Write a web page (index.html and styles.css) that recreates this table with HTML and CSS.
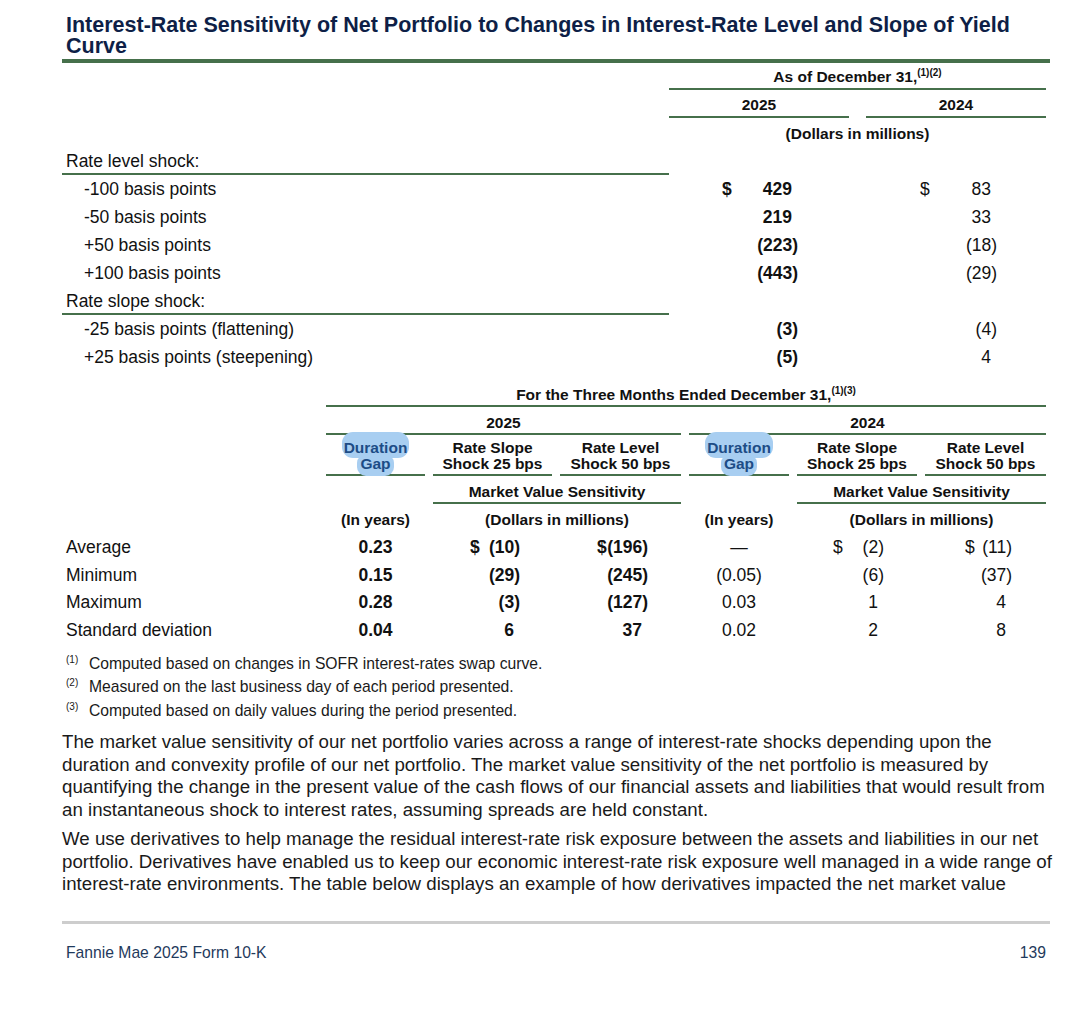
FILE: index.html
```html
<!DOCTYPE html>
<html>
<head>
<meta charset="utf-8">
<title>Interest-Rate Sensitivity</title>
<link rel="stylesheet" href="styles.css">
</head>
<body>
<div class="page">
  <h1 class="title">Interest-Rate Sensitivity of Net Portfolio to Changes in Interest-Rate Level and Slope of Yield Curve</h1>

  <section class="t1">
    <div class="r h1r"><div class="all rule">As of December 31,<sup class="sx">(1)(2)</sup></div></div>
    <div class="r h2r"><div class="c2 rule">2025</div><div class="c4 rule">2024</div></div>
    <div class="r h3r"><div class="all">(Dollars in millions)</div></div>

    <div class="r sec"><div class="lbl rule">Rate level shock:</div></div>
    <div class="r d"><div class="lbl ind">-100 basis points</div><div class="c2 m a25 b"><span class="cur">$</span><span class="num p">429</span></div><div class="c4 m a24"><span class="cur">$</span><span class="num p">83</span></div></div>
    <div class="r d"><div class="lbl ind">-50 basis points</div><div class="c2 m a25 b"><span class="num p">219</span></div><div class="c4 m a24"><span class="num p">33</span></div></div>
    <div class="r d"><div class="lbl ind">+50 basis points</div><div class="c2 m a25 b"><span class="num">(223)</span></div><div class="c4 m a24"><span class="num">(18)</span></div></div>
    <div class="r d"><div class="lbl ind">+100 basis points</div><div class="c2 m a25 b"><span class="num">(443)</span></div><div class="c4 m a24"><span class="num">(29)</span></div></div>
    <div class="r sec"><div class="lbl rule">Rate slope shock:</div></div>
    <div class="r d"><div class="lbl ind">-25 basis points (flattening)</div><div class="c2 m a25 b"><span class="num">(3)</span></div><div class="c4 m a24"><span class="num">(4)</span></div></div>
    <div class="r d"><div class="lbl ind">+25 basis points (steepening)</div><div class="c2 m a25 b"><span class="num">(5)</span></div><div class="c4 m a24"><span class="num p">4</span></div></div>
  </section>

  <section class="t2">
    <div class="r g1"><div class="all rule">For the Three Months Ended December 31,<sup class="sx">(1)(3)</sup></div></div>
    <div class="r g2"><div class="y25 rule">2025</div><div class="y24 rule">2024</div></div>
    <div class="r g3">
      <div class="k2 rule ch"><span class="hl hl1">Duration</span><br><span class="hl hl2">Gap</span></div>
      <div class="k3 rule ch">Rate Slope<br>Shock 25 bps</div>
      <div class="k4 rule ch">Rate Level<br>Shock 50 bps</div>
      <div class="k5 rule ch"><span class="hl hl1">Duration</span><br><span class="hl hl2">Gap</span></div>
      <div class="k6 rule ch">Rate Slope<br>Shock 25 bps</div>
      <div class="k7 rule ch">Rate Level<br>Shock 50 bps</div>
    </div>
    <div class="r g4"><div class="mv25 rule">Market Value Sensitivity</div><div class="mv24 rule">Market Value Sensitivity</div></div>
    <div class="r g5"><div class="k2">(In years)</div><div class="mv25">(Dollars in millions)</div><div class="k5">(In years)</div><div class="mv24">(Dollars in millions)</div></div>

    <div class="r d2">
      <div class="lbl">Average</div>
      <div class="k2 ctr b">0.23</div>
      <div class="k3 m s25 b"><span class="cur">$</span><span class="num">(10)</span></div>
      <div class="k4 m l25 b"><span class="cur">$</span><span class="num">(196)</span></div>
      <div class="k5 ctr">—</div>
      <div class="k6 m s24"><span class="cur">$</span><span class="num">(2)</span></div>
      <div class="k7 m l24"><span class="cur">$</span><span class="num">(11)</span></div>
    </div>
    <div class="r d2">
      <div class="lbl">Minimum</div>
      <div class="k2 ctr b">0.15</div>
      <div class="k3 m s25 b"><span class="num">(29)</span></div>
      <div class="k4 m l25 b"><span class="num">(245)</span></div>
      <div class="k5 ctr">(0.05)</div>
      <div class="k6 m s24"><span class="num">(6)</span></div>
      <div class="k7 m l24"><span class="num">(37)</span></div>
    </div>
    <div class="r d2">
      <div class="lbl">Maximum</div>
      <div class="k2 ctr b">0.28</div>
      <div class="k3 m s25 b"><span class="num">(3)</span></div>
      <div class="k4 m l25 b"><span class="num">(127)</span></div>
      <div class="k5 ctr">0.03</div>
      <div class="k6 m s24"><span class="num p">1</span></div>
      <div class="k7 m l24"><span class="num p">4</span></div>
    </div>
    <div class="r d2">
      <div class="lbl">Standard deviation</div>
      <div class="k2 ctr b">0.04</div>
      <div class="k3 m s25 b"><span class="num p">6</span></div>
      <div class="k4 m l25 b"><span class="num p">37</span></div>
      <div class="k5 ctr">0.02</div>
      <div class="k6 m s24"><span class="num p">2</span></div>
      <div class="k7 m l24"><span class="num p">8</span></div>
    </div>
  </section>

  <ol class="notes">
    <li><span class="mk">(1)</span><span>Computed based on changes in SOFR interest-rates swap curve.</span></li>
    <li><span class="mk">(2)</span><span>Measured on the last business day of each period presented.</span></li>
    <li><span class="mk">(3)</span><span>Computed based on daily values during the period presented.</span></li>
  </ol>

  <p class="para">The market value sensitivity of our net portfolio varies across a range of interest-rate shocks depending upon the duration and convexity profile of our net portfolio. The market value sensitivity of the net portfolio is measured by quantifying the change in the present value of the cash flows of our financial assets and liabilities that would result from an instantaneous shock to interest rates, assuming spreads are held constant.</p>
  <p class="para">We use derivatives to help manage the residual interest-rate risk exposure between the assets and liabilities in our net portfolio. Derivatives have enabled us to keep our economic interest-rate risk exposure well managed in a wide range of interest-rate environments. The table below displays an example of how derivatives impacted the net market value</p>

  <footer class="foot">
    <span>Fannie Mae 2025 Form 10-K</span>
    <span>139</span>
  </footer>
</div>
</body>
</html>
```

FILE: styles.css
```css
* { box-sizing: border-box; margin: 0; padding: 0; }

body {
  font-family: "Liberation Sans", Arial, sans-serif;
  color: #111;
  background: #fff;
}

.page {
  width: 994px;
  margin-left: 62px;
  padding-top: 15px;
}

.title {
  width: 988px;
  font-size: 21.5px;
  line-height: 21px;
  font-weight: bold;
  color: #0e1f47;
  padding-left: 4px;
  padding-bottom: 2px;
  border-bottom: 4px solid #46704b;
}

/* shared */
.r { display: grid; width: 984px; }
.rule { border-bottom: 2px solid #46704b; }
.b { font-weight: bold; }
.sx { font-size: 10px; vertical-align: 6px; line-height: 0; font-weight: bold; }

.m { display: flex; align-items: baseline; }
.m .num { margin-left: auto; }
.m .p { padding-right: 6px; }
.ctr { text-align: center; }

/* table 1 */
.t1 .r { grid-template-columns: 607px 180px 17px 180px; }
.t1 .all { grid-column: 2 / 5; text-align: center; font-weight: bold; font-size: 15.5px; }
.t1 .c2 { grid-column: 2; }
.t1 .c4 { grid-column: 4; }
.t1 .lbl { grid-column: 1; font-size: 17.5px; padding-left: 4px; }
.t1 .lbl.ind { padding-left: 22px; }

.h1r .all { padding: 5px 0 2px; line-height: 18px; }
.h2r > div { padding: 6px 0 2px; line-height: 18px; text-align: center; font-weight: bold; font-size: 15.5px; }
.h3r .all { padding: 7px 0 4px; line-height: 18px; }

.sec .lbl { line-height: 20px; padding-top: 4px; padding-bottom: 2px; }
.d { font-size: 17.5px; line-height: 28px; }
.a25 { padding-left: 53px; padding-right: 51px; }
.a24 { padding-left: 54px; padding-right: 49px; }

/* table 2 */
.t2 { margin-top: 15px; }
.t2 .r { grid-template-columns: 256px 99px 119px 121px 100px 120px 121px; column-gap: 8px; }
.t2 .all { grid-column: 2 / 8; }
.t2 .lbl { grid-column: 1; padding-left: 4px; }
.y25 { grid-column: 2 / 5; }
.y24 { grid-column: 5 / 8; }
.k2 { grid-column: 2; }
.k3 { grid-column: 3; }
.k4 { grid-column: 4; }
.k5 { grid-column: 5; }
.k6 { grid-column: 6; }
.k7 { grid-column: 7; }
.mv25 { grid-column: 3 / 5; }
.mv24 { grid-column: 6 / 8; }

.g1, .g2, .g3, .g4, .g5 { font-weight: bold; font-size: 15.5px; text-align: center; }
.g1 > div { padding: 0 0 1px; line-height: 18px; }
.g2 > div { padding: 7px 0 1px; line-height: 18px; }
.g3 > div { padding: 5px 0 2px; line-height: 16px; }
.g4 > div { padding: 7px 0 1px; line-height: 18px; }
.g5 > div { padding: 7px 0 5px; line-height: 18px; }

.hl { background: #a8cef1; color: #1d4c86; }
.hl1 { padding: 7px 2px 2px; border-radius: 11px; }
.hl2 { padding: 1px 3px 4px; border-radius: 9px; }

.d2 { font-size: 17.5px; line-height: 27.7px; }
.s25 { padding-left: 37px; padding-right: 32px; }
.l25 { padding-left: 37px; padding-right: 33px; }
.s24 { padding-left: 36px; padding-right: 33px; }
.l24 { padding-left: 40px; padding-right: 34px; }

/* footnotes */
.notes { list-style: none; margin-top: 7px; font-size: 15.7px; line-height: 23.5px; color: #1a1a1a; }
.notes li { display: flex; }
.mk { width: 27px; padding-left: 4px; font-size: 10px; line-height: 16px; flex: none; }

/* paragraphs */
.para { font-size: 18.7px; line-height: 22.5px; color: #1a1a1a; }
.notes + .para { margin-top: 9px; }
.para + .para { margin-top: 7px; }

/* footer */
.foot {
  width: 988px;
  margin-top: 25px;
  border-top: 3px solid #cdcdcd;
  display: flex;
  justify-content: space-between;
  padding: 20px 4px 0 4px;
  font-size: 15.7px;
  line-height: 18px;
  color: #1f3a5c;
}
```
